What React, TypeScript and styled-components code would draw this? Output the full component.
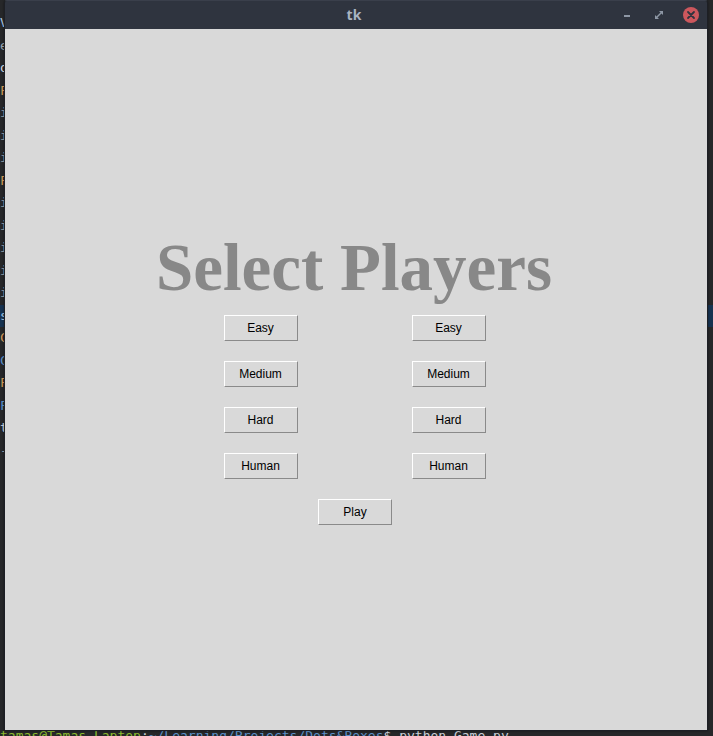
import React from "react";
import styled, { createGlobalStyle } from "styled-components";

const Global = createGlobalStyle`
  html, body { margin: 0; padding: 0; background: #262729; }
  body { width: 713px; height: 736px; overflow: hidden; }
  * { box-sizing: border-box; }
`;

const Desktop = styled.div`
  position: relative;
  width: 713px;
  height: 736px;
  background: #262729;
  overflow: hidden;
`;

const Terminal = styled.div`
  display: flex;
  flex-direction: column;
  height: 736px;
  padding-top: 12px;
  font-family: "DejaVu Sans Mono", "Liberation Mono", monospace;
  font-size: 13px;
  line-height: 22.5px;
  white-space: pre;
  color: #c9ced6;
`;

const TermLine = styled.div<{ $color?: string; $bg?: string }>`
  color: ${(p) => p.$color || "#c9ced6"};
  background: ${(p) => p.$bg || "transparent"};
`;

const Prompt = styled.div`
  margin-top: auto;
  height: 6px;
  overflow: hidden;
  line-height: 16px;
  display: flex;
`;

const PromptInner = styled.div`
  margin-top: -2px;
`;

const Span = styled.span<{ $color: string }>`
  color: ${(p) => p.$color};
`;

const Window = styled.div`
  position: absolute;
  left: 4px;
  top: 0;
  width: 704px;
  height: 731px;
  display: flex;
  flex-direction: column;
  border: 1px solid #1d1f25;
  border-top-color: #3a3f4b;
  border-radius: 3px 3px 0 0;
  overflow: hidden;
  box-shadow: 0 0 2px rgba(0, 0, 0, 0.5);
`;

const TitleBar = styled.div`
  position: relative;
  height: 28px;
  flex: none;
  background: #2f343f;
  display: flex;
  align-items: center;
  justify-content: center;
`;

const Title = styled.div`
  font-family: "Noto Sans", "DejaVu Sans", sans-serif;
  font-weight: 700;
  font-size: 14px;
  color: #a9b3c1;
  margin-left: -4px;
  margin-top: -1px;
`;

const Controls = styled.div`
  position: absolute;
  right: 7px;
  top: 0;
  height: 28px;
  display: flex;
  align-items: center;
  gap: 14px;
`;

const Ctrl = styled.div`
  width: 18px;
  height: 18px;
  display: flex;
  align-items: center;
  justify-content: center;
`;

const Content = styled.div`
  flex: 1;
  background: #d9d9d9;
  display: flex;
  flex-direction: column;
  align-items: center;
  justify-content: center;
`;

const Heading = styled.h1`
  margin: 0 0 14px -4px;
  font-family: "Liberation Serif", "Times New Roman", serif;
  font-weight: 700;
  font-size: 67px;
  line-height: 67px;
  color: #888888;
`;

const Grid = styled.div`
  display: grid;
  grid-template-columns: 74px 74px;
  column-gap: 114px;
  row-gap: 20px;
  margin: 0 0 20px -3px;
`;

const TkButton = styled.button<{ $shift?: number }>`
  width: 74px;
  height: 26px;
  padding: 0;
  margin: 0 0 0 ${(p) => p.$shift || 0}px;
  background: #d9d9d9;
  border: 1px solid;
  border-color: #ffffff #8a8a8a #8a8a8a #ffffff;
  border-radius: 0;
  font-family: "Liberation Sans", Arial, sans-serif;
  font-size: 12px;
  color: #000;
  cursor: pointer;
`;

const levels = ["Easy", "Medium", "Hard", "Human"];

const sideLines: { t: string; c?: string; bg?: string }[] = [
  { t: "Vari", c: "#a9c4e0" },
  { t: "e", c: "#9aa3ad" },
  { t: "ol", c: "#d8dde3" },
  { t: "F", c: "#d39a5a" },
  { t: "i", c: "#9aa3ad" },
  { t: "i", c: "#9aa3ad" },
  { t: "i", c: "#9aa3ad" },
  { t: "F", c: "#d39a5a" },
  { t: "i", c: "#9aa3ad" },
  { t: "i", c: "#9aa3ad" },
  { t: "i", c: "#9aa3ad" },
  { t: "i", c: "#9aa3ad" },
  { t: "i", c: "#9aa3ad" },
  { t: "s", c: "#a9c4e0", bg: "#163250" },
  { t: "C", c: "#d39a5a" },
  { t: "C", c: "#5b8fc7" },
  { t: "F", c: "#d39a5a" },
  { t: "F", c: "#5b8fc7" },
  { t: "t", c: "#d8dde3" },
  { t: "-", c: "#9aa3ad" },
];

export default function App() {
  return (
    <Desktop>
      <Global />
      <Terminal>
        {sideLines.map((l, i) => (
          <TermLine key={i} $color={l.c} $bg={l.bg}>
            {l.t}
          </TermLine>
        ))}
        <Prompt>
          <PromptInner>
            <Span $color="#8ab82e">tamas@Tamas-Laptop</Span>
            <Span $color="#c9ced6">:</Span>
            <Span $color="#5b8fc7">~/Learning/Projects/Dots&amp;Boxes</Span>
            <Span $color="#c9ced6">$ python Game.py</Span>
          </PromptInner>
        </Prompt>
      </Terminal>
      <Window>
        <TitleBar>
          <Title>tk</Title>
          <Controls>
            <Ctrl>
              <svg width="18" height="18" viewBox="0 0 18 18">
                <rect x="6" y="9" width="6" height="2" fill="#8e97a5" />
              </svg>
            </Ctrl>
            <Ctrl>
              <svg width="18" height="18" viewBox="0 0 18 18">
                <path d="M9 5h4v4z" fill="#8e97a5" />
                <path d="M5 9v4h4z" fill="#8e97a5" />
                <path d="M6.5 11.5l5-5" stroke="#8e97a5" strokeWidth="1.4" />
              </svg>
            </Ctrl>
            <Ctrl>
              <svg width="18" height="18" viewBox="0 0 18 18">
                <circle cx="9" cy="9" r="8" fill="#cc575d" />
                <path
                  d="M6 6l6 6M12 6l-6 6"
                  stroke="#2f343f"
                  strokeWidth="1.8"
                  strokeLinecap="round"
                />
              </svg>
            </Ctrl>
          </Controls>
        </TitleBar>
        <Content>
          <Heading>Select Players</Heading>
          <Grid>
            {levels.map((lv) => (
              <React.Fragment key={lv}>
                <TkButton>{lv}</TkButton>
                <TkButton>{lv}</TkButton>
              </React.Fragment>
            ))}
          </Grid>
          <TkButton $shift={-2}>Play</TkButton>
        </Content>
      </Window>
    </Desktop>
  );
}
